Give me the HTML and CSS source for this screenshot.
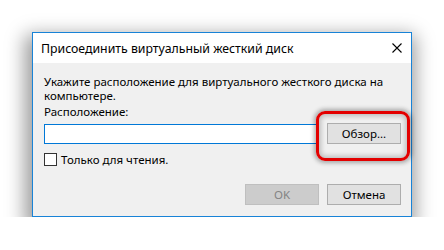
FILE: index.html
```html
<!DOCTYPE html>
<html lang="ru">
<head>
    <meta charset="UTF-8">
    <meta name="viewport" content="width=device-width, initial-scale=1.0">
    <title>Присоединить виртуальный жесткий диск</title>
    <link rel="stylesheet" href="styles.css">
</head>
<body>
    <div class="dialog">
        <div class="titlebar">
            <span class="title">Присоединить виртуальный жесткий диск</span>
            <svg class="close" width="10" height="10" viewBox="0 0 10 10">
                <path d="M0.5 0.5 L9.5 9.5 M9.5 0.5 L0.5 9.5" stroke="#000" stroke-width="1.1" fill="none"/>
            </svg>
        </div>
        <div class="content">
            <p class="hint">Укажите расположение для виртуального жесткого диска на<br>компьютере.</p>
            <label class="field-label" for="path">Расположение:</label>
            <div class="path-row">
                <input type="text" id="path" class="path">
                <button class="btn">Обзор...</button>
            </div>
            <label class="check"><span class="box"></span>Только для чтения.</label>
            <div class="actions">
                <button class="btn" disabled>OK</button>
                <button class="btn">Отмена</button>
            </div>
        </div>
        <!-- red marker round the browse button -->
        <div class="highlight"></div>
    </div>
</body>
</html>
```

FILE: styles.css
```css
body {
    margin: 0;
    background-color: #fff;
    font-family: "Noto Sans", "Open Sans", sans-serif;
    font-size: 11.5px;
    color: #000;
}
.dialog {
    position: relative;
    margin: 32px 0 0 32px;
    width: 378px;
    height: 183px;
    border: 1px solid #1883d7;
    background-color: #f0f0f0;
    box-shadow: -2px 8px 18px 5px rgba(0, 0, 0, 0.4);
}
.titlebar {
    display: flex;
    align-items: center;
    justify-content: space-between;
    height: 30px;
    padding: 0 9px 0 8px;
    background-color: #fff;
}
.title {
    font-size: 12.3px;
}
.close {
    display: block;
}
.content {
    padding: 12px 10px 0 11px;
}
.hint {
    margin: 0;
    line-height: 14px;
}
.field-label {
    display: block;
    margin-top: 1px;
    line-height: 15px;
}
.path-row {
    display: flex;
    gap: 9px;
    margin-top: 4px;
}
.path {
    flex: 1;
    box-sizing: border-box;
    height: 20px;
    margin: 1px 0 0;
    padding: 0 3px;
    border: 1px solid #0078d7;
    background: #fff;
    outline: none;
}
.btn {
    box-sizing: border-box;
    width: 74px;
    height: 21px;
    padding: 0;
    border: 1px solid #adadad;
    background-color: #e1e1e1;
    font-family: inherit;
    font-size: 11.5px;
    color: #000;
}
.btn:disabled {
    border-color: #bfbfbf;
    background-color: #cccccc;
    color: #838383;
}
.check {
    display: flex;
    align-items: center;
    gap: 4px;
    margin-top: 9px;
    line-height: 13px;
}
.box {
    box-sizing: border-box;
    width: 13px;
    height: 13px;
    border: 1px solid #333;
    background: #fff;
}
.actions {
    display: flex;
    justify-content: flex-end;
    gap: 8px;
    margin-top: 18px;
}
.highlight {
    position: absolute;
    left: 283px;
    top: 78px;
    width: 88px;
    height: 44px;
    border: 3px solid #e30000;
    border-radius: 9px;
    box-shadow: 0 0 4px 2px rgba(0, 0, 0, 0.3), inset 0 0 5px 2px rgba(0, 0, 0, 0.22);
}
```
